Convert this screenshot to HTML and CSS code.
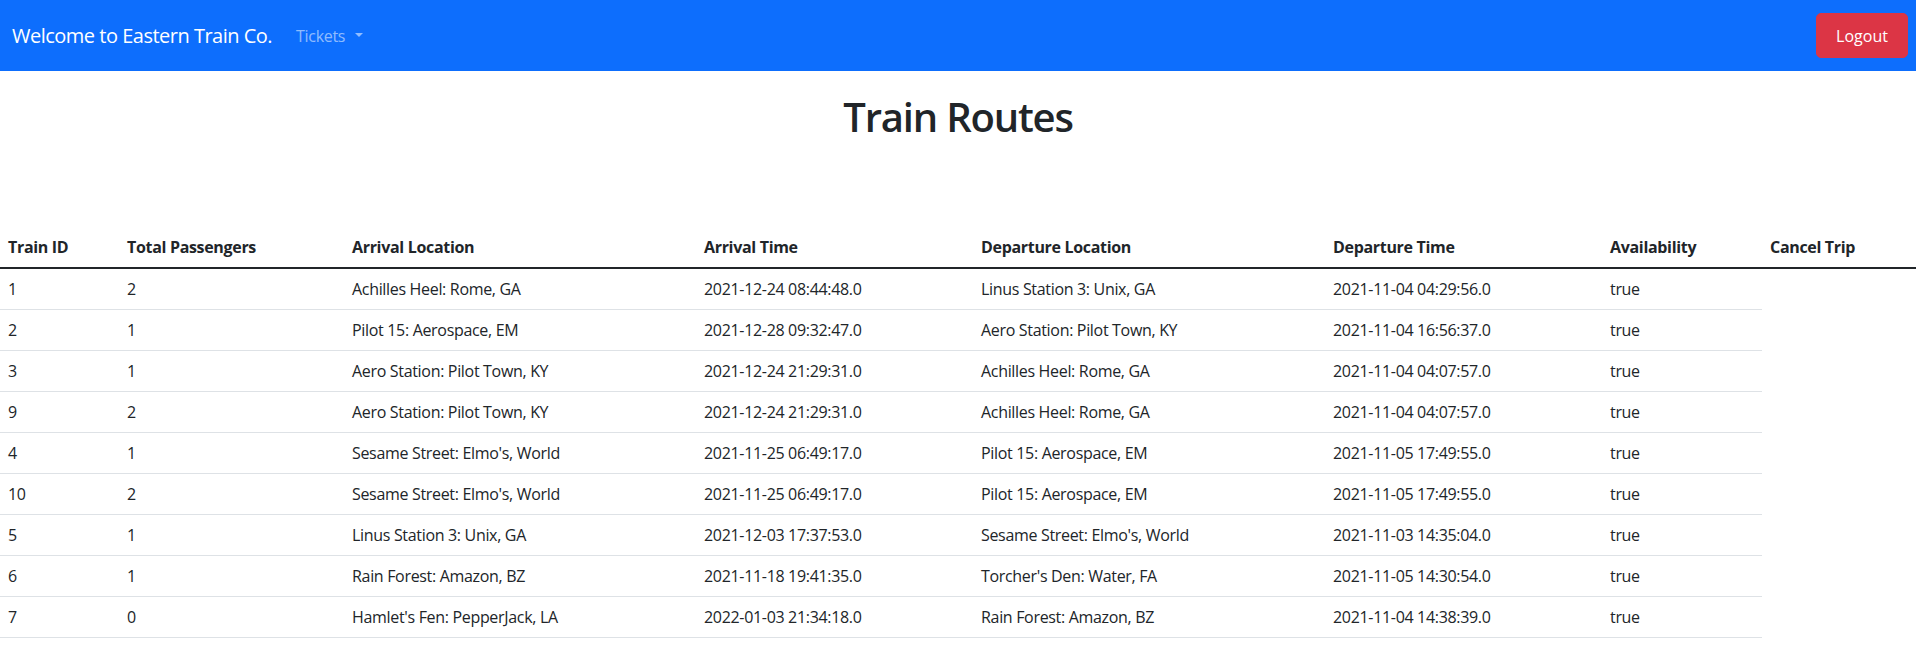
FILE: index.html
```html
<!DOCTYPE html>
<html lang="en">
<head>
<meta charset="utf-8">
<title>Train Routes</title>
<link rel="stylesheet" href="styles.css">
</head>
<body>
<nav class="navbar">
  <div class="nav-left">
    <a class="brand" href="#">Welcome to Eastern Train Co.</a>
    <a class="nav-link dropdown-toggle" href="#">Tickets</a>
  </div>
  <button class="btn-logout" type="button">Logout</button>
</nav>

<h1 class="title">Train Routes</h1>

<table class="routes">
  <colgroup>
    <col class="c-id"><col class="c-pass"><col class="c-arrloc"><col class="c-arrtime">
    <col class="c-deploc"><col class="c-deptime"><col class="c-avail"><col class="c-cancel">
  </colgroup>
  <thead>
    <tr>
      <th>Train ID</th><th>Total Passengers</th><th>Arrival Location</th><th>Arrival Time</th>
      <th>Departure Location</th><th>Departure Time</th><th>Availability</th><th>Cancel Trip</th>
    </tr>
  </thead>
  <tbody>
    <tr><td>1</td><td>2</td><td>Achilles Heel: Rome, GA</td><td>2021-12-24 08:44:48.0</td><td>Linus Station 3: Unix, GA</td><td>2021-11-04 04:29:56.0</td><td>true</td></tr>
    <tr><td>2</td><td>1</td><td>Pilot 15: Aerospace, EM</td><td>2021-12-28 09:32:47.0</td><td>Aero Station: Pilot Town, KY</td><td>2021-11-04 16:56:37.0</td><td>true</td></tr>
    <tr><td>3</td><td>1</td><td>Aero Station: Pilot Town, KY</td><td>2021-12-24 21:29:31.0</td><td>Achilles Heel: Rome, GA</td><td>2021-11-04 04:07:57.0</td><td>true</td></tr>
    <tr><td>9</td><td>2</td><td>Aero Station: Pilot Town, KY</td><td>2021-12-24 21:29:31.0</td><td>Achilles Heel: Rome, GA</td><td>2021-11-04 04:07:57.0</td><td>true</td></tr>
    <tr><td>4</td><td>1</td><td>Sesame Street: Elmo's, World</td><td>2021-11-25 06:49:17.0</td><td>Pilot 15: Aerospace, EM</td><td>2021-11-05 17:49:55.0</td><td>true</td></tr>
    <tr><td>10</td><td>2</td><td>Sesame Street: Elmo's, World</td><td>2021-11-25 06:49:17.0</td><td>Pilot 15: Aerospace, EM</td><td>2021-11-05 17:49:55.0</td><td>true</td></tr>
    <tr><td>5</td><td>1</td><td>Linus Station 3: Unix, GA</td><td>2021-12-03 17:37:53.0</td><td>Sesame Street: Elmo's, World</td><td>2021-11-03 14:35:04.0</td><td>true</td></tr>
    <tr><td>6</td><td>1</td><td>Rain Forest: Amazon, BZ</td><td>2021-11-18 19:41:35.0</td><td>Torcher's Den: Water, FA</td><td>2021-11-05 14:30:54.0</td><td>true</td></tr>
    <tr><td>7</td><td>0</td><td>Hamlet's Fen: PepperJack, LA</td><td>2022-01-03 21:34:18.0</td><td>Rain Forest: Amazon, BZ</td><td>2021-11-04 14:38:39.0</td><td>true</td></tr>
  </tbody>
</table>
</body>
</html>
```

FILE: styles.css
```css
* { box-sizing: border-box; }

body {
  margin: 0;
  font-family: "Open Sans", "Noto Sans", "Liberation Sans", sans-serif;
  font-size: 16px;
  line-height: 1.5;
  color: #212529;
  background: #fff;
}

.navbar {
  height: 71px;
  background: #0d6efd;
  display: flex;
  align-items: center;
  justify-content: space-between;
  padding: 0 8px 0 12px;
}

.nav-left {
  display: flex;
  align-items: center;
}

.brand {
  color: #fff;
  font-size: 20px;
  line-height: 30px;
  text-decoration: none;
  margin-right: 16px;
  letter-spacing: -0.025em;
}

.nav-link {
  color: rgba(255, 255, 255, 0.55);
  text-decoration: none;
  padding: 0 8px;
  line-height: 24px;
  font-size: 16px;
  letter-spacing: -0.02em;
}

.dropdown-toggle::after {
  content: "";
  display: inline-block;
  margin-left: 0.6em;
  vertical-align: 0.255em;
  border-top: 0.3em solid;
  border-right: 0.3em solid transparent;
  border-left: 0.3em solid transparent;
}

.btn-logout {
  width: 92px;
  height: 45px;
  border: 1px solid #dc3545;
  border-radius: 5px;
  background: #dc3545;
  color: #fff;
  font-family: inherit;
  font-size: 16px;
  line-height: 24px;
  padding: 0;
}

.title {
  margin: 22px 0 86px;
  font-size: 40px;
  line-height: 48px;
  font-weight: 600;
  text-align: center;
  letter-spacing: -0.03em;
}

.routes {
  width: 100%;
  border-collapse: collapse;
  table-layout: fixed;
  letter-spacing: -0.02em;
}

.c-id { width: 119px; }
.c-pass { width: 225px; }
.c-arrloc { width: 352px; }
.c-arrtime { width: 277px; }
.c-deploc { width: 352px; }
.c-deptime { width: 277px; }
.c-avail { width: 160px; }
.c-cancel { width: 154px; }

.routes th {
  text-align: left;
  font-weight: 700;
  padding: 8px 8px;
  border-bottom: 2px solid #212529;
  white-space: nowrap;
}

.routes td {
  padding: 8px 8px;
  border-bottom: 1px solid #dee2e6;
  white-space: nowrap;
}
```
